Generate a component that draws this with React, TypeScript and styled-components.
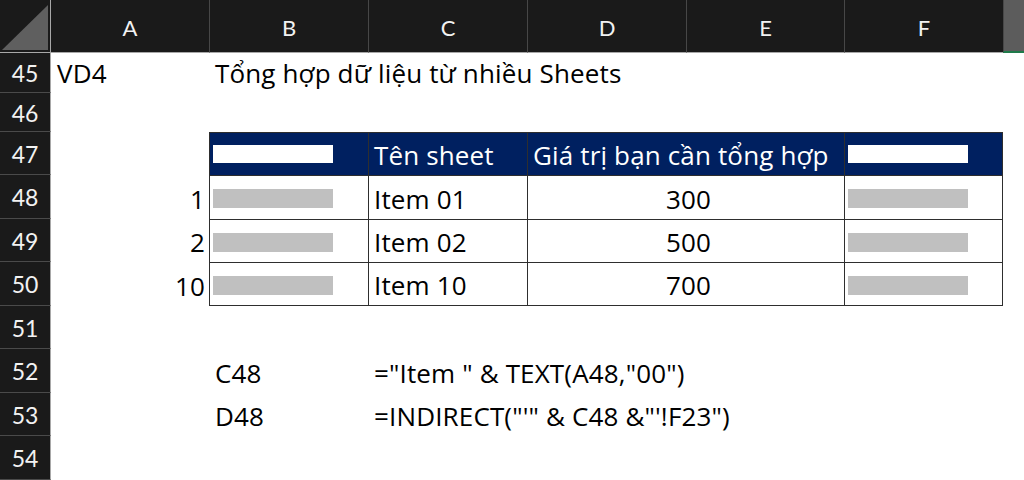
import React from "react";
import styled, { createGlobalStyle } from "styled-components";

const Global = createGlobalStyle`
  html, body { margin: 0; padding: 0; background: #ffffff; }
  body { width: 1024px; height: 480px; overflow: hidden; font-family: Lato, "Open Sans", sans-serif; }
`;

const HEAD_FONT = `Lato, "Noto Sans", sans-serif`;
const CELL_FONT = `"Open Sans", "Noto Sans", sans-serif`;

const Sheet = styled.div`
  display: grid;
  grid-template-columns: 51px 158px 159px 159px 159px 158px 159px 1fr;
  grid-template-rows: 53px 40px 39px 43px 44px 43px 44px 43px 44px 43px 44px;
  width: 1024px;
  height: 480px;
  overflow: hidden;
  background: #ffffff;
  font-family: ${HEAD_FONT};
`;

const Corner = styled.div`
  grid-column: 1;
  grid-row: 1;
  background: #1a1a1a;
  border-right: 1px solid #a8a8a8;
  border-bottom: 1px solid #a8a8a8;
  box-sizing: border-box;
  display: flex;
  align-items: flex-end;
  justify-content: flex-end;
  padding: 0 2px 2px 0;
  svg { display: block; }
`;

const ColHeader = styled.div<{ $col: number; $active?: boolean }>`
  grid-column: ${(p) => p.$col};
  grid-row: 1;
  box-sizing: border-box;
  background: ${(p) => (p.$active ? "#5c5c5c" : "#1a1a1a")};
  border-left: ${(p) => (p.$col > 2 ? "1px solid #474747" : "none")};
  border-bottom: ${(p) => (p.$active ? "2px solid #1f7a4a" : "1px solid #a8a8a8")};
  color: #f2f2f2;
  font-size: 22px;
  display: flex;
  align-items: center;
  justify-content: center;
  padding-top: 2px;
`;

const RowHeader = styled.div<{ $row: number }>`
  grid-column: 1;
  grid-row: ${(p) => p.$row};
  box-sizing: border-box;
  background: #1a1a1a;
  border-right: 1px solid #a8a8a8;
  border-bottom: 1px solid #4a4a4a;
  color: #f2f2f2;
  font-size: 23px;
  display: flex;
  align-items: center;
  justify-content: center;
  padding-top: 1px;
`;

const Cell = styled.div<{ $col: number; $row: number; $align?: "left" | "right" | "center" }>`
  grid-column: ${(p) => p.$col};
  grid-row: ${(p) => p.$row};
  box-sizing: border-box;
  display: flex;
  align-items: flex-end;
  justify-content: ${(p) => (p.$align === "right" ? "flex-end" : p.$align === "center" ? "center" : "flex-start")};
  padding: 0 ${(p) => (p.$align === "right" ? "4px" : "0")} 7px ${(p) => (p.$align === "right" ? "0" : "6px")};
  font-family: ${CELL_FONT};
  font-size: 26px;
  letter-spacing: 0.15px;
  line-height: 1;
  color: #000;
  white-space: nowrap;
  overflow: visible;
  z-index: 1;
`;

const Table = styled.div`
  grid-column: 3 / 8;
  grid-row: 4 / 8;
  display: grid;
  grid-template-columns: 159px 159px 317px 1fr;
  grid-template-rows: 43px 44px 43px 1fr;
  box-sizing: border-box;
  border-right: 1px solid #2e2e2e;
  border-bottom: 1px solid #2e2e2e;
`;

const TCell = styled.div<{ $head?: boolean; $align?: "left" | "center" }>`
  box-sizing: border-box;
  border-left: 1px solid #2e2e2e;
  border-top: 1px solid #2e2e2e;
  background: ${(p) => (p.$head ? "#002060" : "#ffffff")};
  color: ${(p) => (p.$head ? "#ffffff" : "#000000")};
  display: flex;
  align-items: flex-end;
  justify-content: ${(p) => (p.$align === "center" ? "center" : "flex-start")};
  padding: 0 0 7px 5px;
  font-family: ${CELL_FONT};
  font-size: 26px;
  letter-spacing: 0.15px;
  line-height: 1;
  white-space: nowrap;
`;

const BarCell = styled(TCell)`
  padding: 0 0 0 3px;
  align-items: center;
`;

const Bar = styled.div<{ $light?: boolean }>`
  width: 120px;
  height: ${(p) => (p.$light ? "18px" : "19px")};
  background: ${(p) => (p.$light ? "#ffffff" : "#c0c0c0")};
  margin-top: ${(p) => (p.$light ? "0px" : "2px")};
`;

const cols = ["A", "B", "C", "D", "E", "F", ""];
const rows = [45, 46, 47, 48, 49, 50, 51, 52, 53, 54];

const data = [
  { n: "1", name: "Item 01", v: "300" },
  { n: "2", name: "Item 02", v: "500" },
  { n: "10", name: "Item 10", v: "700" },
];

export default function App() {
  return (
    <>
      <Global />
      <Sheet>
        <Corner>
          <svg width="46" height="45" viewBox="0 0 46 45">
            <polygon points="0,45 46,0 46,45" fill="#5f5f5f" />
          </svg>
        </Corner>
        {cols.map((c, i) => (
          <ColHeader key={i} $col={i + 2} $active={c === ""}>
            {c}
          </ColHeader>
        ))}
        {rows.map((r, i) => (
          <RowHeader key={r} $row={i + 2}>
            {r}
          </RowHeader>
        ))}

        <Cell $col={2} $row={2}>VD4</Cell>
        <Cell $col={3} $row={2}>Tổng hợp dữ liệu từ nhiều Sheets</Cell>

        <Table>
          <BarCell $head>
            <Bar $light />
          </BarCell>
          <TCell $head>Tên sheet</TCell>
          <TCell $head>Giá trị bạn cần tổng hợp</TCell>
          <BarCell $head>
            <Bar $light />
          </BarCell>
          {data.map((d) => (
            <React.Fragment key={d.n}>
              <BarCell>
                <Bar />
              </BarCell>
              <TCell>{d.name}</TCell>
              <TCell $align="center">{d.v}</TCell>
              <BarCell>
                <Bar />
              </BarCell>
            </React.Fragment>
          ))}
        </Table>

        {data.map((d, i) => (
          <Cell key={d.n} $col={2} $row={5 + i} $align="right">
            {d.n}
          </Cell>
        ))}

        <Cell $col={3} $row={9}>C48</Cell>
        <Cell $col={4} $row={9}>="Item " &amp; TEXT(A48,"00")</Cell>
        <Cell $col={3} $row={10}>D48</Cell>
        <Cell $col={4} $row={10}>=INDIRECT("'" &amp; C48 &amp;"'!F23")</Cell>
      </Sheet>
    </>
  );
}
